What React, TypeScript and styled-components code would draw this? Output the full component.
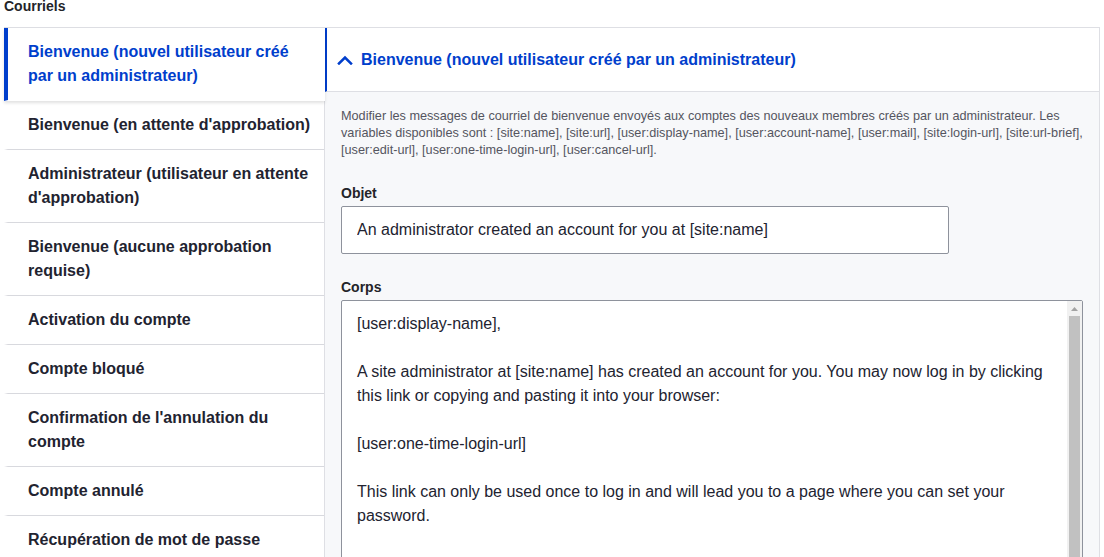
import React from "react";
import styled, { createGlobalStyle } from "styled-components";

const Global = createGlobalStyle`
  html, body { margin: 0; padding: 0; background: #ffffff; }
  body { font-family: "Liberation Sans", Arial, sans-serif; color: #222330; }
  * { box-sizing: border-box; }
`;

const Page = styled.div`
  padding: 0 4px;
`;

const GroupLabel = styled.div`
  font-size: 14px;
  font-weight: 700;
  line-height: 12px;
  color: #232429;
  margin-bottom: 15px;
`;

const Tabs = styled.div`
  display: flex;
  border-top: 1px solid #dedfe4;
  align-items: flex-start;
`;

const Menu = styled.ul`
  list-style: none;
  margin: 0;
  padding: 0;
  width: 320px;
  flex: none;
`;

const MenuItem = styled.li<{ $selected?: boolean }>`
  position: relative;
  z-index: ${(p) => (p.$selected ? 2 : 1)};
  margin-right: ${(p) => (p.$selected ? "-1px" : "0")};
  background: #ffffff;
  border-bottom: 1px solid ${(p) => (p.$selected ? "transparent" : "#d8d9de")};
  border-left: 4px solid ${(p) => (p.$selected ? "#003ecc" : "transparent")};
  box-shadow: ${(p) => (p.$selected ? "0 2px 3px rgba(0, 0, 0, 0.12)" : "none")};
  padding: 12px 12px 12px 20px;
  font-size: 16px;
  font-weight: 700;
  line-height: 24px;
  color: ${(p) => (p.$selected ? "#003ecc" : "#222330")};
`;

const Pane = styled.div`
  flex: 1;
  min-width: 0;
  border-left: 1px solid #dedfe4;
  border-right: 1px solid #dedfe4;
  background: #f7f8fa;
`;

const Summary = styled.div`
  display: flex;
  align-items: center;
  gap: 8px;
  height: 64px;
  padding-left: 10px;
  background: #ffffff;
  border-left: 2px solid #003ecc;
  border-bottom: 1px solid #dedfe4;
  font-size: 16px;
  font-weight: 700;
  line-height: 24px;
  color: #003ecc;
`;

const Content = styled.div`
  padding: 16px 16px 24px 16px;
`;

const Description = styled.div`
  font-size: 12.7px;
  line-height: 17px;
  color: #545560;
  margin-bottom: 25px;
`;

const FormItem = styled.div`
  margin-bottom: 24px;
`;

const Label = styled.label`
  display: block;
  font-size: 14px;
  font-weight: 700;
  line-height: 18px;
  color: #232429;
  margin-bottom: 4px;
`;

const TextInput = styled.input`
  display: block;
  width: 608px;
  height: 48px;
  padding: 11px 15px;
  border: 1px solid #8e929c;
  border-radius: 2px;
  background: #ffffff;
  font-family: "Liberation Sans", Arial, sans-serif;
  font-size: 16px;
  line-height: 24px;
  color: #222330;
  outline: none;
`;

const AreaWrap = styled.div`
  position: relative;
`;

const TextArea = styled.textarea`
  display: block;
  width: 100%;
  height: 310px;
  padding: 11px 30px 11px 15px;
  border: 1px solid #8e929c;
  border-radius: 2px;
  background: #ffffff;
  font-family: "Liberation Sans", Arial, sans-serif;
  font-size: 16px;
  line-height: 24px;
  color: #222330;
  resize: none;
  overflow: hidden;
  outline: none;
`;

const ScrollTrack = styled.div`
  position: absolute;
  top: 1px;
  right: 1px;
  bottom: 1px;
  width: 15px;
  background: #f1f1f1;
  display: flex;
  flex-direction: column;
  align-items: center;
`;

const ScrollArrow = styled.div`
  flex: none;
  height: 15px;
  width: 15px;
  display: flex;
  align-items: center;
  justify-content: center;
`;

const ScrollThumb = styled.div`
  width: 11px;
  height: 270px;
  background: #c1c1c1;
`;

const Chevron = () => (
  <svg width="16" height="10" viewBox="0 0 16 10" fill="none">
    <polyline
      points="2,8.5 8,2.5 14,8.5"
      stroke="#003ecc"
      strokeWidth="2.5"
      strokeLinecap="square"
      fill="none"
    />
  </svg>
);

const UpTriangle = () => (
  <svg width="7" height="4" viewBox="0 0 7 4">
    <polygon points="0,4 3.5,0 7,4" fill="#a3a3a3" />
  </svg>
);

const items = [
  "Bienvenue (nouvel utilisateur créé par un administrateur)",
  "Bienvenue (en attente d'approbation)",
  "Administrateur (utilisateur en attente d'approbation)",
  "Bienvenue (aucune approbation requise)",
  "Activation du compte",
  "Compte bloqué",
  "Confirmation de l'annulation du compte",
  "Compte annulé",
  "Récupération de mot de passe",
];

const body = `[user:display-name],

A site administrator at [site:name] has created an account for you. You may now log in by clicking this link or copying and pasting it into your browser:

[user:one-time-login-url]

This link can only be used once to log in and will lead you to a page where you can set your password.

After setting your password, you will be able to log in at [site:login-url] in the future using:

username: [user:name]
password: Your password

--  [site:name] team`;

export default function App() {
  return (
    <Page>
      <Global />
      <GroupLabel>Courriels</GroupLabel>
      <Tabs>
        <Menu>
          {items.map((t, i) => (
            <MenuItem key={t} $selected={i === 0}>
              {t}
            </MenuItem>
          ))}
        </Menu>
        <Pane>
          <Summary>
            <Chevron />
            <span>Bienvenue (nouvel utilisateur créé par un administrateur)</span>
          </Summary>
          <Content>
            <Description>
              Modifier les messages de courriel de bienvenue envoyés aux comptes des nouveaux membres
              créés par un administrateur. Les variables disponibles sont : [site:name], [site:url],
              [user:display-name], [user:account-name], [user:mail], [site:login-url],
              [site:url-brief], [user:edit-url], [user:one-time-login-url], [user:cancel-url].
            </Description>
            <FormItem>
              <Label>Objet</Label>
              <TextInput
                type="text"
                defaultValue="An administrator created an account for you at [site:name]"
              />
            </FormItem>
            <FormItem>
              <Label>Corps</Label>
              <AreaWrap>
                <TextArea defaultValue={body} />
                <ScrollTrack>
                  <ScrollArrow>
                    <UpTriangle />
                  </ScrollArrow>
                  <ScrollThumb />
                </ScrollTrack>
              </AreaWrap>
            </FormItem>
          </Content>
        </Pane>
      </Tabs>
    </Page>
  );
}
